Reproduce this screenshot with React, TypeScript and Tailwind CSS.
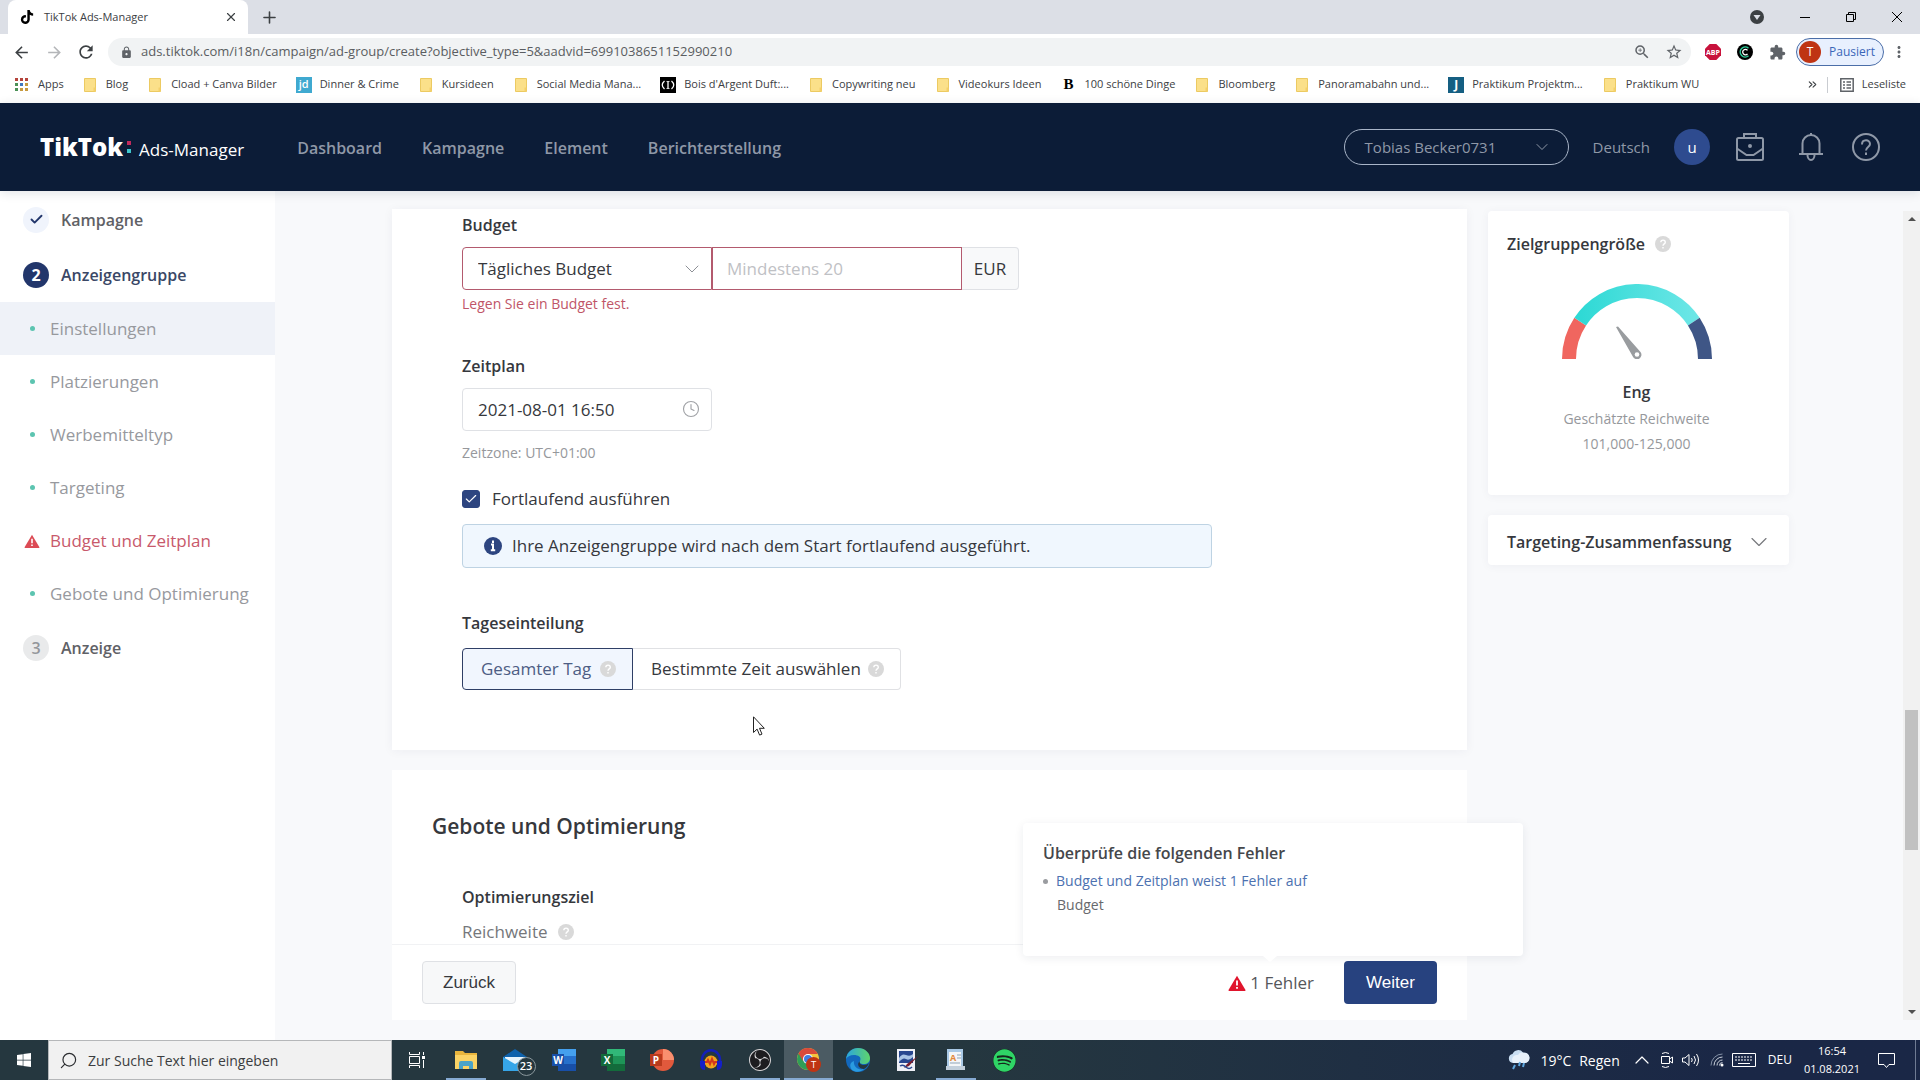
import { useState } from 'react';
import { FaSpotify, FaTiktok, FaWindows } from 'react-icons/fa';
import { SiObsstudio } from 'react-icons/si';
import {
  MdArrowBack,
  MdArrowForward,
  MdExtension,
  MdLock,
  MdMoreVert,
  MdRefresh,
  MdStarBorder,
  MdZoomIn,
} from 'react-icons/md';
import { Check, ChevronDown, ChevronUp, ChevronsRight, Clock4, Plus, Search, X } from 'lucide-react';

const bookmarks = [
  { label: 'Blog', icon: 'folder' },
  { label: 'Cload + Canva Bilder', icon: 'folder' },
  { label: 'Dinner & Crime', icon: 'jd' },
  { label: 'Kursideen', icon: 'folder' },
  { label: 'Social Media Mana...', icon: 'folder' },
  { label: "Bois d'Argent Duft:...", icon: 'dior' },
  { label: 'Copywriting neu', icon: 'folder' },
  { label: 'Videokurs Ideen', icon: 'folder' },
  { label: '100 schöne Dinge', icon: 'bold' },
  { label: 'Bloomberg', icon: 'folder' },
  { label: 'Panoramabahn und...', icon: 'folder' },
  { label: 'Praktikum Projektm...', icon: 'j' },
  { label: 'Praktikum WU', icon: 'folder' },
];

const steps = [
  { label: 'Einstellungen', state: 'active' },
  { label: 'Platzierungen', state: 'done' },
  { label: 'Werbemitteltyp', state: 'done' },
  { label: 'Targeting', state: 'done' },
  { label: 'Budget und Zeitplan', state: 'error' },
  { label: 'Gebote und Optimierung', state: 'done' },
];

function Warning({ className }: { className: string }) {
  return (
    <svg viewBox="0 0 18 16" className={className}>
      <path d="M9 .8 17.5 15a.8.8 0 0 1-.7 1H1.200a.8.800 0 0 1-.7-1z" fill="currentColor" />
      <path d="M9 5.500v5M9 12v1.800" stroke="#fff" strokeWidth="1.800" />
    </svg>
  );
}

function Help() {
  return (
    <svg viewBox="0 0 16 16" className="size-4 shrink-0">
      <circle cx="8" cy="8" r="8" fill="#d9d9d9" />
      <path d="M5.800 6.300C5.800 3.400 10.300 3.400 10.300 6.200 10.300 7.900 8 7.900 8 9.700M8 11v1.500" fill="none" stroke="#fff" strokeWidth="1.400" />
    </svg>
  );
}

function BookmarkIcon({ icon }: { icon: string }) {
  if (icon === 'jd') {
    return <span className="-mx-0.5 flex size-4 items-center justify-center bg-[#3fa9d0] text-[11px] font-semibold text-white">jd</span>;
  }
  if (icon === 'dior') {
    return (
      <svg viewBox="0 0 16 16" className="-mx-0.5 size-4">
        <path d="M0 0h16v16H0z" fill="#000" />
        <path d="M4.500 4Q0 8 4.500 12M11.500 4Q16 8 11.500 12M8 4.500v7" fill="none" stroke="#fff" strokeWidth="1.300" />
        <path d="M6.500 4.500h3M6.500 11.500h3" stroke="#fff" strokeWidth=".8" />
      </svg>
    );
  }
  if (icon === 'bold') {
    return <span className="flex w-3 justify-center font-['Liberation_Serif',serif] text-[15px] font-bold text-black">B</span>;
  }
  if (icon === 'j') {
    return <span className="-mx-0.5 flex size-4 items-center justify-center bg-[#155f82] text-[12px] font-bold text-white">J</span>;
  }
  return (
    <svg viewBox="0 0 12 14" className="h-3.5 w-3">
      <path d="M.5.500h11v13H.5z" fill="#fbe08a" stroke="#ecca62" />
      <path d="M9.500 9.500h2v4h-2z" fill="#f4d06b" />
    </svg>
  );
}

function BrowserChrome() {
  return (
    <div className="text-[#3c4043]">
      <div className="flex h-[34px] items-center bg-[#dcdfe6] pl-2">
        <div className="flex h-full w-60 items-center rounded-t-lg bg-white pl-3 pr-2.5">
          <FaTiktok size={14} className="mr-2.5 text-black" />
          <span className="flex-1 text-[11px]">TikTok Ads-Manager</span>
          <button aria-label="Tab schließen"><X size={14} /></button>
        </div>
        <button aria-label="Neuer Tab" className="ml-3"><Plus size={19} /></button>
        <div className="ml-auto flex items-center pr-[18px] text-black">
          <svg viewBox="0 0 14 14" className="mr-9 size-3.5">
            <circle cx="7" cy="7" r="7" fill="#3c4043" />
            <path d="M3.500 5h7L7 10z" fill="#dcdfe6" />
          </svg>
          <button aria-label="Minimieren" className="mr-9">
            <svg viewBox="0 0 10 10" className="size-2.5"><path d="M0 5.500h10" stroke="#000" /></svg>
          </button>
          <button aria-label="Wiederherstellen" className="mr-9">
            <svg viewBox="0 0 10 10" className="size-2.5" fill="none" stroke="#000"><path d="M.5 2.500h7v7h-7zM2.500 2.500v-2h7v7h-2" /></svg>
          </button>
          <button aria-label="Schließen">
            <svg viewBox="0 0 10 10" className="size-2.5" stroke="#000"><path d="m0 0 10 10M10 0 0 10" /></svg>
          </button>
        </div>
      </div>

      <div className="flex h-9 items-center bg-white pl-3 pr-3">
        <button aria-label="Zurück"><MdArrowBack size={19} /></button>
        <button aria-label="Vorwärts" className="ml-3.5 text-[#b4b6b9]"><MdArrowForward size={19} /></button>
        <button aria-label="Neu laden" className="ml-3"><MdRefresh size={20} /></button>
        <div className="ml-3 flex h-7 flex-1 items-center rounded-full bg-[#f1f3f4] pl-3 pr-2">
          <MdLock size={13} className="mr-2 text-[#5f6368]" />
          <input
            aria-label="Adresse"
            className="flex-1 bg-transparent text-[13px] text-[#5a5d61] outline-none"
            defaultValue="ads.tiktok.com/i18n/campaign/ad-group/create?objective_type=5&aadvid=6991038651152990210"
          />
          <MdZoomIn size={18} className="mr-3.5 text-[#5f6368]" />
          <MdStarBorder size={18} className="text-[#5f6368]" />
        </div>
        <svg viewBox="0 0 16 16" className="ml-3.5 size-4">
          <path d="M4.700 0h6.600L16 4.700v6.600L11.300 16H4.700L0 11.300V4.700z" fill="#c8123c" />
          <text x="8" y="10.500" textAnchor="middle" fontSize="7" fontWeight="700" fill="#fff">ABP</text>
        </svg>
        <svg viewBox="0 0 16 16" className="ml-4 size-4">
          <circle cx="8" cy="8" r="8" fill="#000" />
          <path d="M11.500 4.200a5 5 0 1 0 0 7.600" fill="none" stroke="#2ecc9a" strokeWidth="1.500" />
          <path d="M10.500 6.400a2.700 2.700 0 1 0 0 3.400" fill="none" stroke="#fff" strokeWidth="1.300" />
        </svg>
        <MdExtension size={17} className="ml-4 text-[#5f6368]" />
        <button className="ml-2.5 flex h-7 items-center rounded-full border border-[#4b6ea8] bg-[#e8f0fe] pl-0.5 pr-2 text-[12px] text-[#3a66b8]">
          <span className="mr-2 flex size-[22px] items-center justify-center rounded-full bg-[#bf3413] text-white">T</span>
          Pausiert
        </button>
        <MdMoreVert size={18} className="ml-1.5 text-[#5f6368]" />
      </div>

      <div className="flex h-[33px] items-center bg-white pb-1 pl-[15px] pr-3.5 text-[11px]">
        <a href="#apps" className="mr-5 flex items-center gap-2.5">
          <svg viewBox="0 0 13 13" className="size-[13px]">
            <path d="M0 0h3v3H0zM5 0h3v3H5zM10 0h3v3h-3z" fill="#b5443c" />
            <path d="M0 5h3v3H0z" fill="#4b9157" />
            <path d="M5 5h3v3H5z" fill="#3f78c0" />
            <path d="M10 5h3v3h-3z" fill="#c79a3f" />
            <path d="M0 10h3v3H0z" fill="#4b9157" />
            <path d="M5 10h3v3H5zM10 10h3v3h-3z" fill="#c79a3f" />
          </svg>
          Apps
        </a>
        <nav className="flex items-center gap-[21px]">
          {bookmarks.map((b) => (
            <a key={b.label} href="#bookmark" className="flex items-center gap-2.5 whitespace-nowrap">
              <BookmarkIcon icon={b.icon} />
              {b.label}
            </a>
          ))}
        </nav>
        <ChevronsRight size={13} className="ml-auto" />
        <div className="ml-2 mr-3 h-4 w-px bg-[#c9ccd1]" />
        <svg viewBox="0 0 14 14" className="mr-2 size-3.5" fill="none" stroke="#5f6368" strokeWidth="1.500">
          <path d="M.8.800h12.400v12.400H.8zM3 4h2M6.500 4H11M3 7h2M6.500 7H11M3 10h2M6.500 10H11" />
        </svg>
        Leseliste
      </div>
    </div>
  );
}

function Header() {
  return (
    <header className="relative flex h-[88px] shrink-0 items-center bg-[#0c1c37] pl-10 pr-10 text-[17px] text-[#8f98a7] shadow-[0_2px_10px_rgba(20,30,60,0.12)]">
      <div className="flex items-center text-white">
        <span className="text-[24px] font-extrabold">TikTok</span>
        <svg viewBox="0 0 4 14" className="ml-1 mr-2 h-3.5 w-1">
          <path d="M0 1h4v4H0z" fill="#c22a5c" />
          <path d="M0 9h4v4H0z" fill="#3fc6cc" />
        </svg>
        <span className="pt-1.5">Ads-Manager</span>
      </div>
      <nav className="ml-[53px] flex gap-10 pt-px text-[16px] font-semibold">
        <a href="#dashboard">Dashboard</a>
        <a href="#kampagne">Kampagne</a>
        <a href="#element">Element</a>
        <a href="#berichte">Berichterstellung</a>
      </nav>
      <button className="ml-auto flex h-9 w-[225px] items-center justify-between rounded-full border border-[#a9b5c8] pl-5 pr-4 text-[15px]">
        Tobias Becker0731
        <ChevronDown size={20} strokeWidth={1.2} />
      </button>
      <button className="ml-6 text-[15px]">Deutsch</button>
      <span className="ml-6 flex size-9 items-center justify-center rounded-full bg-[#2e4b8f] text-[15px] text-white">u</span>
      <svg viewBox="0 0 28 28" className="ml-[26px] size-7" fill="none" stroke="currentColor" strokeWidth="2">
        <rect x="1" y="5" width="26" height="22" rx="1.500" />
        <path d="M8 5V1h12v4M1 15.500l9.500 6.500h7l9.500-6.500" />
        <circle cx="14" cy="13" r="1" fill="currentColor" />
      </svg>
      <svg viewBox="0 0 26 28" className="ml-[34px] h-7 w-[26px]" fill="none" stroke="currentColor" strokeWidth="2">
        <path d="M1 21h24M4.500 21V10.500a8.500 8.500 0 0 1 17 0V21M9.500 22a3.500 5 0 0 0 7 0M13 0v2" />
      </svg>
      <svg viewBox="0 0 28 28" className="ml-7 size-7" fill="none" stroke="currentColor" strokeWidth="2">
        <circle cx="14" cy="14" r="13" />
        <path d="M10 11.500c0-5.500 8-5.500 8-.5 0 3-4 3-4 6.500M14 19.500v2.500" />
      </svg>
    </header>
  );
}

function Sidebar() {
  return (
    <aside className="w-[275px] shrink-0 bg-white pt-px text-[17px]">
      <a href="#kampagne" className="flex h-[55px] items-center gap-3 pl-[23px] text-[16px] font-semibold text-[#5f6166]">
        <span className="flex size-[26px] items-center justify-center rounded-full bg-[#f0f4fc]">
          <Check size={15} strokeWidth={3} className="text-[#22366b]" />
        </span>
        Kampagne
      </a>
      <a href="#anzeigengruppe" className="flex h-[55px] items-center gap-3 pl-[23px] text-[16px] font-semibold text-[#3a4766]">
        <span className="flex size-[26px] items-center justify-center rounded-full bg-[#22366b] font-bold text-white">2</span>
        Anzeigengruppe
      </a>
      {steps.map((step) => (
        <a
          key={step.label}
          href="#step"
          className={`flex h-[53px] items-center pl-6 ${step.state === 'active' ? 'bg-[#eff2f8]' : ''} ${
            step.state === 'error' ? 'text-[#c8596b]' : 'text-[#97999e]'
          }`}
        >
          <span className="mr-2.5 flex w-4 justify-center">
            {step.state === 'error' ? (
              <Warning className="h-3.5 w-4 text-[#dc4b55]" />
            ) : (
              <span className="size-[5px] rounded-full bg-[#5cc4b0]" />
            )}
          </span>
          {step.label}
        </a>
      ))}
      <a href="#anzeige" className="flex h-[55px] items-center gap-3 pl-[23px] text-[16px] font-semibold text-[#5f6166]">
        <span className="flex size-[26px] items-center justify-center rounded-full bg-[#e9eaeb] text-[#94979c]">3</span>
        Anzeige
      </a>
    </aside>
  );
}

function BudgetCard() {
  const [runAlways, setRunAlways] = useState(true);

  return (
    <section className="flex shrink-0 flex-col items-start bg-white pb-[60px] pl-[70px] pt-1 text-[17px] text-[#36383d] shadow-[0_1px_10px_rgba(30,40,70,0.05)]">
      <label htmlFor="budget" className="text-[16px] font-semibold leading-6">Budget</label>
      <div className="mt-2.5 flex h-[43px]">
        <div className="relative">
          <select
            aria-label="Budgettyp"
            className="h-full w-[250px] appearance-none rounded-l border border-[#b35a6e] bg-white pl-[15px] outline-none"
          >
            <option>Tägliches Budget</option>
          </select>
          <ChevronDown size={24} strokeWidth={1} className="pointer-events-none absolute right-2 top-2.5 text-[#8d9096]" />
        </div>
        <input
          id="budget"
          placeholder="Mindestens 20"
          className="w-[250px] border border-[#b35a6e] pl-3.5 outline-none placeholder:text-[#bfc1c5]"
        />
        <span className="flex w-[57px] items-center justify-center rounded-r border border-l-0 border-[#dfe1e5] bg-[#f8f9fa]">EUR</span>
      </div>
      <p className="mt-1 text-[14px] leading-5 text-[#bf5568]">Legen Sie ein Budget fest.</p>

      <label htmlFor="start" className="mt-10 text-[16px] font-semibold leading-6">Zeitplan</label>
      <div className="relative mt-2.5">
        <input
          id="start"
          defaultValue="2021-08-01 16:50"
          className="h-[43px] w-[250px] rounded border border-[#dfe1e5] pl-[15px] outline-none"
        />
        <Clock4 size={18} strokeWidth={1.5} className="absolute right-3 top-3 text-[#a0a2a6]" />
      </div>
      <p className="mt-3 text-[14px] leading-5 text-[#96989c]">Zeitzone: UTC+01:00</p>

      <label className="mt-6 flex items-center leading-6">
        <span className="relative mr-3 flex">
          <input
            type="checkbox"
            checked={runAlways}
            onChange={(e) => setRunAlways(e.target.checked)}
            className="size-[18px] appearance-none rounded-[3px] border border-[#2d4580] checked:bg-[#2d4580]"
          />
          {runAlways && <Check size={14} strokeWidth={2} className="pointer-events-none absolute left-0.5 top-0.5 text-white" />}
        </span>
        Fortlaufend ausführen
      </label>
      <div className="mt-[13px] flex h-11 w-[750px] items-center rounded border border-[#bed3e3] bg-[#f0f7fe] pl-[21px]">
        <svg viewBox="0 0 18 18" className="mr-2.5 size-[18px]">
          <circle cx="9" cy="9" r="9" fill="#2d4580" />
          <path d="M9 3.500v2.500M7 7.500h2V13M6.800 13.200h4.400" fill="none" stroke="#fff" strokeWidth="2" />
        </svg>
        Ihre Anzeigengruppe wird nach dem Start fortlaufend ausgeführt.
      </div>

      <h3 className="mt-[43px] text-[16px] font-semibold leading-6">Tageseinteilung</h3>
      <div className="mt-[13px] flex h-[42px]">
        <button className="flex w-[171px] items-center justify-between rounded-l border border-[#2f3f66] bg-[#f1f6fe] pl-[18px] pr-4 text-[#4d5d84]">
          Gesamter Tag
          <Help />
        </button>
        <button className="flex w-[268px] items-center justify-between rounded-r border border-l-0 border-[#e0e1e4] pl-[18px] pr-4">
          Bestimmte Zeit auswählen
          <Help />
        </button>
      </div>
    </section>
  );
}

function BiddingCard() {
  return (
    <section className="min-h-0 flex-1 overflow-hidden bg-white pl-10 pt-10 text-[#36383d]">
      <h2 className="text-[21px] font-semibold leading-8">Gebote und Optimierung</h2>
      <h3 className="ml-[30px] mt-[43px] text-[16px] font-semibold leading-6">Optimierungsziel</h3>
      <p className="ml-[30px] mt-[11px] flex items-center gap-2.5 text-[17px] leading-6 text-[#75777b]">
        Reichweite
        <Help />
      </p>
    </section>
  );
}

function FooterBar() {
  return (
    <footer className="relative flex h-[76px] shrink-0 items-center border-t border-[#f1f2f4] bg-white pl-[30px] pr-[30px]">
      <button className="h-[43px] w-[94px] rounded border border-[#dfe1e5] bg-[#f7f8f9] font-['Liberation_Sans',sans-serif] text-[17px] text-[#36383d]">
        Zurück
      </button>
      <div className="ml-auto mr-[30px] flex items-center gap-1 text-[17px] text-[#55575b]">
        <Warning className="h-4 w-[18px] text-[#e0142c]" />
        1 Fehler
      </div>
      <button className="h-[43px] w-[93px] rounded bg-[#27427f] font-['Liberation_Sans',sans-serif] text-[17px] font-medium text-white">
        Weiter
      </button>

      <div className="absolute -right-14 bottom-16 h-[133px] w-[500px] rounded bg-white pl-5 pt-[18px] shadow-[0_2px_10px_rgba(30,40,70,0.08)]">
        <h4 className="text-[16px] font-semibold leading-6 text-[#45474b]">Überprüfe die folgenden Fehler</h4>
        <ul className="mt-1 text-[14px] leading-6">
          <li className="flex items-center">
            <span className="mr-2 size-[5px] rounded-full bg-[#9a9ca0]" />
            <a href="#budget" className="text-[#4c71b0]">Budget und Zeitplan weist 1 Fehler auf</a>
          </li>
          <li className="pl-3.5 text-[#67696d]">Budget</li>
        </ul>
        <svg viewBox="0 0 14 6" className="absolute left-60 top-full h-1.5 w-3.5">
          <path d="M0 0h14L7 6z" fill="#fff" />
        </svg>
      </div>
    </footer>
  );
}

function AudiencePanel() {
  return (
    <aside className="w-[301px] shrink-0 pt-0.5 text-[16px] text-[#36383d]">
      <section className="flex h-[284px] flex-col items-center rounded bg-white pr-1 pt-[21px] shadow-[0_1px_10px_rgba(30,40,70,0.05)]">
        <h3 className="flex items-center gap-2.5 self-start pl-[19px] font-semibold leading-6">
          Zielgruppengröße
          <Help />
        </h3>
        <svg viewBox="0 0 150 75" className="mt-7 h-[75px] w-[150px]">
          <defs>
            <linearGradient id="reach">
              <stop offset="0" stopColor="#2fd9d5" />
              <stop offset="1" stopColor="#6be6e6" />
            </linearGradient>
          </defs>
          <path d="M7 75A68 68 0 0 1 18.200 37.600" fill="none" stroke="#f0665f" strokeWidth="14" />
          <path d="M18.200 37.600A68 68 0 0 1 131.800 37.600" fill="none" stroke="url(#reach)" strokeWidth="14" />
          <path d="M131.800 37.600A68 68 0 0 1 143 75" fill="none" stroke="#3f5686" strokeWidth="14" />
          <path d="m54 43 2-.5L78.500 68a4.500 4.500 0 1 1-7.700 4.500z" fill="#999c9f" />
          <circle cx="75" cy="70.500" r="2.300" fill="#fff" />
        </svg>
        <p className="mt-[21px] font-semibold leading-6">Eng</p>
        <p className="mt-0.5 text-[14px] leading-[25px] text-[#96989c]">Geschätzte Reichweite</p>
        <p className="text-[14px] leading-[25px] text-[#96989c]">101,000-125,000</p>
      </section>
      <button className="mt-5 flex h-[50px] w-full items-center justify-between whitespace-nowrap rounded bg-white pl-[19px] pr-4 pt-1 font-semibold shadow-[0_1px_10px_rgba(30,40,70,0.05)]">
        Targeting-Zusammenfassung
        <ChevronDown size={28} strokeWidth={1} className="text-[#77797d]" />
      </button>
    </aside>
  );
}

function Scrollbar() {
  return (
    <div className="mb-5 mt-5 flex w-[17px] shrink-0 flex-col items-center justify-between bg-[#f1f1f1] py-1.5">
      <svg viewBox="0 0 8 4" className="h-1 w-2"><path d="M0 4h8L4 0z" fill="#505050" /></svg>
      <div className="flex min-h-0 w-full flex-1 flex-col px-0.5">
        <div className="flex-[49]" />
        <div className="flex-[14] bg-[#c1c1c1]" />
        <div className="flex-[16]" />
      </div>
      <svg viewBox="0 0 8 4" className="h-1 w-2"><path d="M0 0h8L4 4z" fill="#505050" /></svg>
    </div>
  );
}

function OfficeIcon({ letter, dark, mid, light, round }: { letter: string; dark: string; mid: string; light: string; round?: boolean }) {
  return (
    <svg viewBox="0 0 24 24" className="size-6">
      {round ? (
        <>
          <circle cx="13" cy="12" r="11" fill={mid} />
          <path d="M13 1a11 11 0 0 1 11 11H13z" fill={light} />
        </>
      ) : (
        <>
          <path d="M6 1h18v22H6z" fill={mid} />
          <path d="M6 1h18v7H6z" fill={light} />
          <path d="M6 16h18v7H6z" fill={dark} />
        </>
      )}
      <path d="M0 6h12v12H0z" fill={dark} />
      <text x="6" y="15.500" textAnchor="middle" fontSize="10" fontWeight="700" fill="#fff">{letter}</text>
    </svg>
  );
}

function TaskButton({ label, state, children }: { label: string; state?: 'open' | 'focused'; children: React.ReactNode }) {
  return (
    <button
      aria-label={label}
      className={`flex h-full w-[49px] items-center justify-center ${state === 'focused' ? 'bg-[#4b5b63]' : ''}`}
    >
      <span className={`flex h-full items-center justify-center border-y-2 border-t-transparent ${state === 'focused' ? 'w-full' : 'w-10'} ${state ? 'border-b-[#86aad2]' : 'border-b-transparent'}`}>
        {children}
      </span>
    </button>
  );
}

function Taskbar() {
  return (
    <div className="flex h-10 shrink-0 items-center bg-linear-to-r from-[#25373f] from-50% to-[#1a2746] to-90% text-white">
      <button aria-label="Start" className="flex w-12 justify-center"><FaWindows size={16} /></button>
      <div className="flex h-full w-[344px] items-center gap-2.5 border border-[#b5b7b9] bg-[#f1f1f1] pl-2.5 text-[#2b2d30]">
        <Search size={19} strokeWidth={1.5} className="-scale-x-100" />
        <input aria-label="Suche" placeholder="Zur Suche Text hier eingeben" className="flex-1 text-[14px] outline-none placeholder:text-[#3b3d40]" />
      </div>
      <TaskButton label="Aktive Anwendungen">
        <svg viewBox="0 0 16 16" className="size-4" fill="none" stroke="#fff">
          <path d="M.5 4.500h10v7H.5zM.5 0v2.500h10V0M.5 16v-2.500h10V16M14.500 0v3M14.500 8v8" />
          <path d="M13 4h3v3h-3z" fill="#fff" stroke="none" />
        </svg>
      </TaskButton>
      <TaskButton label="Explorer" state="open">
        <svg viewBox="0 0 22 20" className="h-5 w-[22px]">
          <path d="M0 1h8l2 2h12v16H0z" fill="#e9b53d" />
          <path d="M0 5h22v14H0z" fill="#fbd365" />
          <path d="M4 19v-6q0-2 2-2h10q2 0 2 2v6h-4v-3H8v3z" fill="#4aa3c8" />
        </svg>
      </TaskButton>
      <TaskButton label="Mail">
        <span className="relative">
          <svg viewBox="0 0 24 22" className="h-[22px] w-6">
            <path d="M0 8 12 0l12 8v14H0z" fill="#0f62ac" />
            <path d="M2 8h20v7H2z" fill="#e8f4fc" />
            <path d="m0 8 12 7 12-7v14H0z" fill="#36a5e8" />
          </svg>
          <span className="absolute left-3.5 top-2 flex size-[19px] items-center justify-center rounded-full border border-[#8a979c] bg-[#25373f] text-[11px] font-semibold">23</span>
        </span>
      </TaskButton>
      <TaskButton label="Word"><OfficeIcon letter="W" dark="#184fa8" mid="#2670cc" light="#45a0ee" /></TaskButton>
      <TaskButton label="Excel"><OfficeIcon letter="X" dark="#136b3b" mid="#1e9457" light="#31b878" /></TaskButton>
      <TaskButton label="PowerPoint"><OfficeIcon letter="P" dark="#b83a1d" mid="#e1593c" light="#f98f6f" round /></TaskButton>
      <TaskButton label="Audacity">
        <svg viewBox="0 0 24 24" className="size-6">
          <circle cx="12" cy="14" r="6.500" fill="#f2a51d" />
          <path d="M6 14h2l1-2 2 4 2-5 2 5 1-2h2" fill="none" stroke="#d3361c" strokeWidth="2" />
          <path d="M3 15C1 -2 23 -2 21 15" fill="none" stroke="#1420b8" strokeWidth="2.500" />
          <path d="M1 13h5v9q-6 0-5-9zM23 13h-5v9q6 0 5-9z" fill="#1420c8" />
        </svg>
      </TaskButton>
      <TaskButton label="OBS Studio" state="open">
        <span className="rounded-full bg-[#1d1c1f]"><SiObsstudio size={22} className="text-[#d7d7da]" /></span>
      </TaskButton>
      <TaskButton label="Chrome" state="focused">
        <svg viewBox="0 0 24 24" className="size-6">
          <circle cx="11" cy="11" r="11" fill="#f3c43c" />
          <path d="M11 11 1.500 5.500A11 11 0 0 0 11 22l5-8z" fill="#2f9e57" />
          <path d="M11 6h9.800a11 11 0 0 0-19.300-.5L6 13z" fill="#d84a3a" />
          <circle cx="11" cy="11" r="5" fill="#fff" />
          <circle cx="11" cy="11" r="4" fill="#3f7de0" />
          <circle cx="16.500" cy="16.500" r="7.500" fill="#bf3413" />
          <text x="16.500" y="20" textAnchor="middle" fontSize="9.500" fill="#fff">T</text>
        </svg>
      </TaskButton>
      <TaskButton label="Edge">
        <svg viewBox="0 0 24 24" className="size-6">
          <defs>
            <linearGradient id="edge" x1="0" x2="1">
              <stop offset="0" stopColor="#2aa5df" />
              <stop offset="1" stopColor="#5fd56b" />
            </linearGradient>
          </defs>
          <circle cx="12" cy="12" r="12" fill="#1268bd" />
          <path d="M0 11C1 4 6 0 12 0c7 0 12 5 12 10 0 4-3 6-6 6-4 0-5-1.500-4-3 2-4-2-6-6-6C4 7 1 9 0 11z" fill="url(#edge)" />
          <path d="M14 13c-1 1.500 0 4 4 4 2 0 4-1 5-2-1 3-3 5-5 6-5 0-8-5-4-8z" fill="#25373f" />
          <path d="M8 13c-1 5 4 10 10 8-3 3-8 4-12 1-3-4-2-8 2-9z" fill="#2a9be0" />
        </svg>
      </TaskButton>
      <TaskButton label="Bildbearbeitung">
        <svg viewBox="0 0 22 24" className="h-6 w-[22px]">
          <path d="M1 1h18v22H1z" fill="#eef0f6" />
          <path d="M3 3h14v12H3z" fill="#27468f" />
          <path d="M3 10q3-5 7-3t7-1v3q-4 4-7 2t-7 3z" fill="#a8c3e6" />
          <path d="m22 8-11 8-3 4 5-2z" fill="#7a1f2e" />
          <path d="M4 18q3-2 6 1t6 0" fill="none" stroke="#27468f" strokeWidth="1.500" />
        </svg>
      </TaskButton>
      <TaskButton label="WordPad" state="open">
        <svg viewBox="0 0 20 22" className="h-[22px] w-5">
          <path d="M1 0h16v17H1z" fill="#a9c9e6" />
          <path d="M3 3h12v14H3z" fill="#f4f6f8" />
          <path d="M0 17h19v4H0z" fill="#c3d0dc" />
          <path d="M11 6h4M11 9h4M4 14h10" stroke="#8fa5b8" />
          <text x="7" y="12" textAnchor="middle" fontSize="9" fontWeight="700" fill="#e2893b">A</text>
        </svg>
      </TaskButton>
      <TaskButton label="Spotify">
        <span className="rounded-full bg-[#16261d]"><FaSpotify size={23} className="text-[#2fd566]" /></span>
      </TaskButton>

      <div className="ml-auto flex h-full items-center text-[14px]">
        <svg viewBox="0 0 22 20" className="mr-2.5 h-5 w-[22px]">
          <path d="M5 13a4.500 4.500 0 0 1-.5-8.900A6 6 0 0 1 15 2.500a5 5 0 0 1 2 10.500z" fill="#c9def2" />
          <path d="M4 10a5 5 0 0 1 6-5 5 5 0 0 1 6-2 5 5 0 0 1 1 10H5z" fill="#e8f1fa" />
          <path d="m7 15-2 4M12 12l-1 4M16 13l-1 4" stroke="#5fa8e0" strokeWidth="2" />
        </svg>
        <span className="mr-2">19°C</span>
        <span className="mr-2.5">Regen</span>
        <ChevronUp size={24} strokeWidth={1.2} className="mr-1.5" />
        <svg viewBox="0 0 14 18" className="mr-2 h-[18px] w-3.5" fill="none" stroke="#fff">
          <path d="M1.500 5.500h8v7h-8zM9.500 8l3-2v6l-3-2M2 2.500q3.500-2 7 0M2 15.500q3.500 2 7 0" />
        </svg>
        <svg viewBox="0 0 18 14" className="mr-2.5 h-3.5 w-[18px]" fill="none" stroke="#fff">
          <path d="M.5 5v4H3l4 3.500v-11L3 5zM9.500 5q1.500 2 0 4M12 3q3 4 0 8M14.500 1q4 6 0 12" />
        </svg>
        <svg viewBox="0 0 14 14" className="mr-2 size-3.5" fill="none">
          <path d="M1 12.500A11.500 11.500 0 0 1 12.500 1" stroke="#8290a5" />
          <path d="M4 12.500A8.500 8.500 0 0 1 12.500 4M7 12.500A5.500 5.500 0 0 1 12.500 7M9.500 12.500a3 3 0 0 1 3-3" stroke="#cdd4de" />
          <circle cx="12" cy="12" r="1.500" fill="#fff" />
        </svg>
        <svg viewBox="0 0 24 14" className="mr-3 h-3.5 w-6" fill="none" stroke="#fff">
          <path d="M.5.500h23v13H.5zM6 10.500h12" />
          <path d="M3 4h18M3 7h18" strokeDasharray="2 1" />
        </svg>
        <span className="mr-3 text-[12px]">DEU</span>
        <div className="mr-[18px] text-center text-[11px] leading-[18px]">
          <div>16:54</div>
          <div>01.08.2021</div>
        </div>
        <svg viewBox="0 0 17 17" className="mr-5 size-[17px]" fill="none" stroke="#fff">
          <path d="M.5 1.500h16v11H11L8.500 15.500 6 12.500H.5z" />
        </svg>
        <div className="mr-1 h-full w-px bg-[#6f7b93]" />
      </div>
    </div>
  );
}

export default function App() {
  return (
    <div className="flex h-screen flex-col overflow-hidden bg-[#f8f9fb] font-['Open_Sans','Noto_Sans',sans-serif]">
      <BrowserChrome />
      <Header />
      <div className="flex min-h-0 flex-1">
        <Sidebar />
        <div className="flex min-w-0 flex-1 gap-[21px] pl-[117px] pr-[114px] pt-[18px]">
          <main className="flex min-w-0 flex-1 flex-col pb-5">
            <BudgetCard />
            <div className="h-5 shrink-0" />
            <BiddingCard />
            <FooterBar />
          </main>
          <AudiencePanel />
        </div>
        <Scrollbar />
      </div>
      <Taskbar />

      <svg viewBox="0 0 12 20" className="pointer-events-none absolute left-[753px] top-[716px] h-5 w-3">
        <path d="M.5.800v15.700l3.600-3.400 2.500 6 2.400-1-2.500-5.800h4.800z" fill="#fff" stroke="#222" />
      </svg>
    </div>
  );
}
